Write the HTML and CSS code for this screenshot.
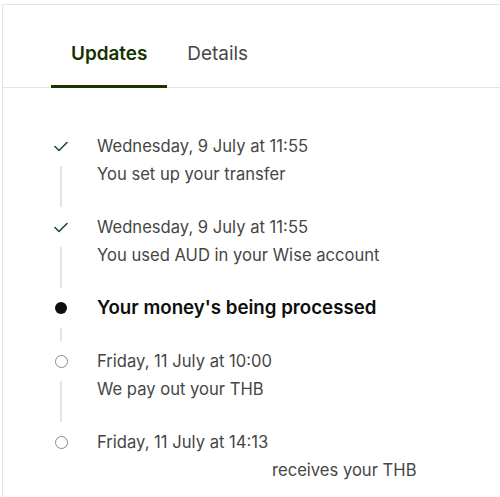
FILE: index.html
```html
<!DOCTYPE html>
<html lang="en">
<head>
    <meta charset="UTF-8">
    <meta name="viewport" content="width=device-width, initial-scale=1.0">
    <title>Transfer updates</title>
    <link rel="stylesheet" href="styles.css">
</head>
<body>
    <div class="panel">
        <div class="tabs">
            <div class="tab active">Updates</div>
            <div class="tab">Details</div>
        </div>

        <ul class="timeline">
            <li class="step done">
                <div class="marker">
                    <span class="icon">
                        <svg width="14" height="11" viewBox="0 0 14 11"><path d="M1 5.5l4 4L13 1.5" fill="none" stroke="#1e4a33" stroke-width="1.6" stroke-linecap="round" stroke-linejoin="round"/></svg>
                    </span>
                    <span class="connector"></span>
                </div>
                <div class="text">
                    <div class="date">Wednesday, 9 July at 11:55</div>
                    <div class="desc">You set up your transfer</div>
                </div>
            </li>
            <li class="step done">
                <div class="marker">
                    <span class="icon">
                        <svg width="14" height="11" viewBox="0 0 14 11"><path d="M1 5.5l4 4L13 1.5" fill="none" stroke="#1e4a33" stroke-width="1.6" stroke-linecap="round" stroke-linejoin="round"/></svg>
                    </span>
                    <span class="connector"></span>
                </div>
                <div class="text">
                    <div class="date">Wednesday, 9 July at 11:55</div>
                    <div class="desc">You used AUD in your Wise account</div>
                </div>
            </li>
            <li class="step current">
                <div class="marker">
                    <span class="icon"><span class="dot"></span></span>
                    <span class="connector"></span>
                </div>
                <div class="text">
                    <div class="title">Your money's being processed</div>
                </div>
            </li>
            <li class="step">
                <div class="marker">
                    <span class="icon"><span class="ring"></span></span>
                    <span class="connector"></span>
                </div>
                <div class="text">
                    <div class="date">Friday, 11 July at 10:00</div>
                    <div class="desc">We pay out your THB</div>
                </div>
            </li>
            <li class="step last">
                <div class="marker">
                    <span class="icon"><span class="ring"></span></span>
                </div>
                <div class="text">
                    <div class="date">Friday, 11 July at 14:13</div>
                    <div class="desc"><span class="redacted"></span>receives your THB</div>
                </div>
            </li>
        </ul>
    </div>
</body>
</html>
```

FILE: styles.css
```css
body {
    margin: 0;
    background-color: #fff;
    font-family: Inter, "Noto Sans", sans-serif;
    color: #454745;
}

.panel {
    margin: 4px 0 0 2px;
    border-top: 1px solid #e4e4e4;
    border-left: 1px solid #e4e4e4;
    height: 492px;
    overflow: hidden;
}

.tabs {
    display: flex;
    padding-left: 48px;
    border-bottom: 1px solid #e4e4e4;
}

.tab {
    padding: 37px 20px 19px;
    margin-bottom: -1px;
    font-size: 18.9px;
    line-height: 24px;
    color: #454745;
    border-bottom: 3px solid transparent;
}

.tab.active {
    font-weight: 600;
    color: #163300;
    border-bottom-color: #163300;
}

.timeline {
    list-style: none;
    margin: 0;
    padding: 46px 0 0 46px;
}

.step {
    display: flex;
    gap: 24px;
}

.marker {
    width: 24px;
    display: flex;
    flex-direction: column;
    align-items: center;
}

.icon {
    height: 24px;
    display: flex;
    align-items: center;
    justify-content: center;
}

.connector {
    flex: 1;
    width: 2px;
    margin: 8px 0;
    background-color: #e4e4e4;
}

.text {
    padding-bottom: 29px;
}

.step.last .text {
    padding-bottom: 0;
}

.date,
.desc {
    font-size: 16.6px;
    line-height: 24px;
}

.desc {
    margin-top: 4px;
}

.title {
    font-size: 18.7px;
    line-height: 24px;
    font-weight: 600;
    color: #0e0f0c;
}

.dot {
    width: 12px;
    height: 12px;
    border-radius: 50%;
    background-color: #0e0f0c;
}

.ring {
    width: 11px;
    height: 11px;
    border-radius: 50%;
    border: 1px solid #8a8a8a;
}

.redacted {
    display: inline-block;
    width: 175px;
}
```
